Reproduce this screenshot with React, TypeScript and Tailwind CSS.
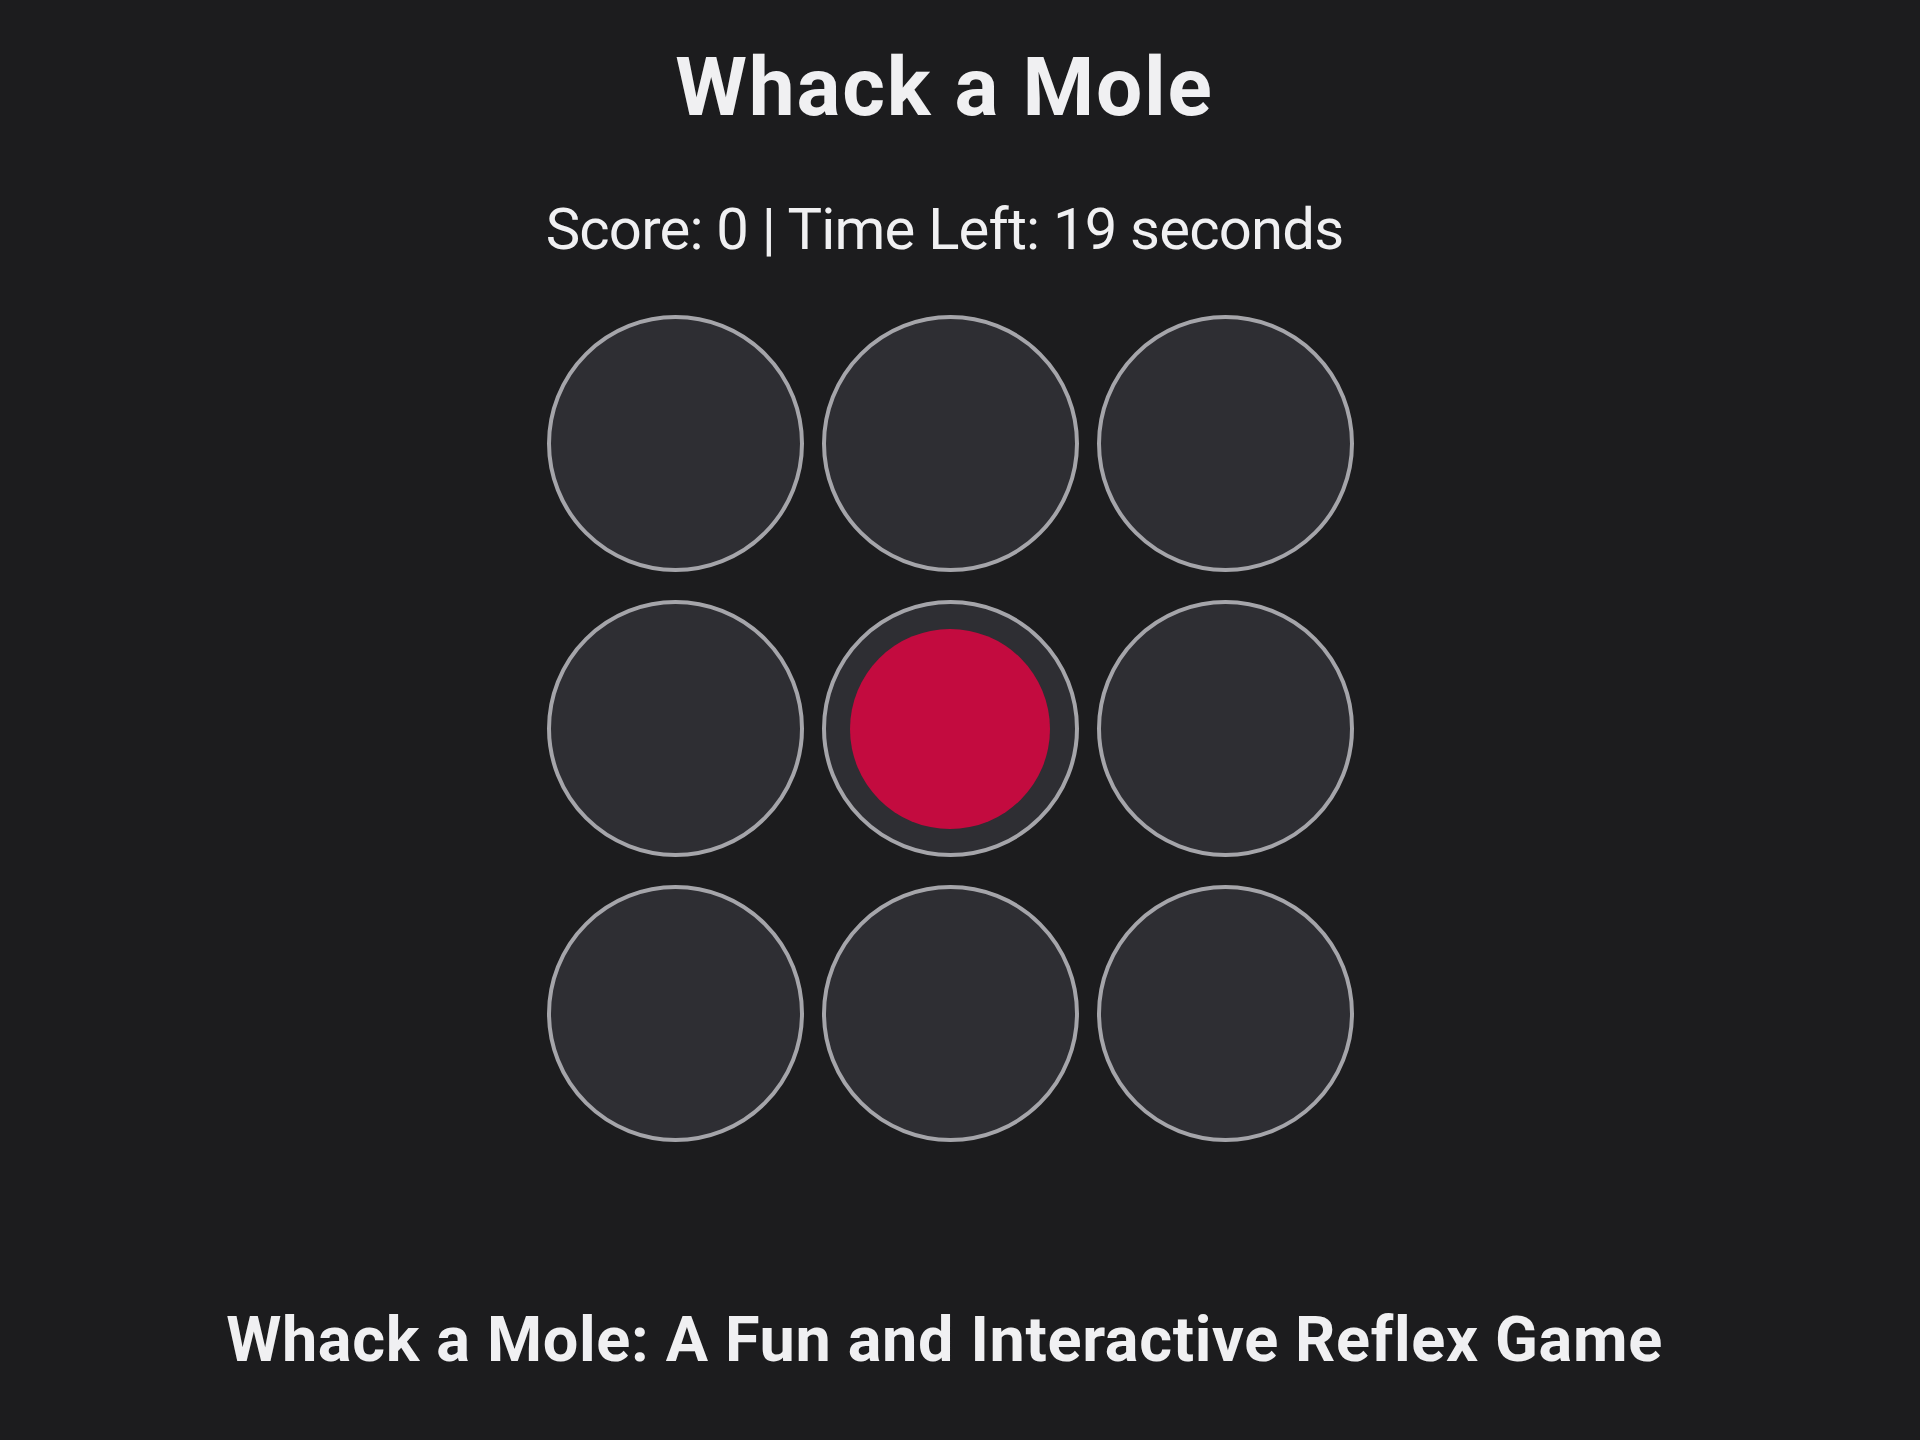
import React, { useState } from 'react';

const HOLES = 9;

const App: React.FC = () => {
    // Static snapshot: score 0, 19 seconds left, mole in the centre hole
    const [score] = useState(0);
    const [timeLeft] = useState(19);
    const [activeHole] = useState(4);

    return (
        <div className="min-h-screen bg-[#1c1c1e] text-[#f0f0f2] font-['Roboto',sans-serif] pr-5">
            <main className="flex flex-col items-center pt-[46px] pb-20">
                <h1 className="mr-[11px] text-[82px] font-bold leading-none tracking-[1.8px]">Whack a Mole</h1>

                <p className="mt-[72px] mr-[11px] text-[58px] leading-none tracking-[-0.8px]">
                    Score: {score} | Time Left: {timeLeft} seconds
                </p>

                {/* Board */}
                <div className="mt-[57px] grid grid-cols-3 gap-x-[18px] gap-y-[28px]">
                    {Array.from({ length: HOLES }).map((_, i) => (
                        <button
                            key={i}
                            className="w-[257px] h-[257px] rounded-full bg-[#2e2e33] border-4 border-[#a5a5aa] flex items-center justify-center"
                        >
                            {i === activeHole && <span className="w-[200px] h-[200px] rounded-full bg-[#c30b3f]" />}
                        </button>
                    ))}
                </div>

                <h2 className="mt-[166px] mr-[11px] text-[63px] font-bold leading-none tracking-[0.65px]">
                    Whack a Mole: A Fun and Interactive Reflex Game
                </h2>
            </main>
        </div>
    );
};

export default App;
